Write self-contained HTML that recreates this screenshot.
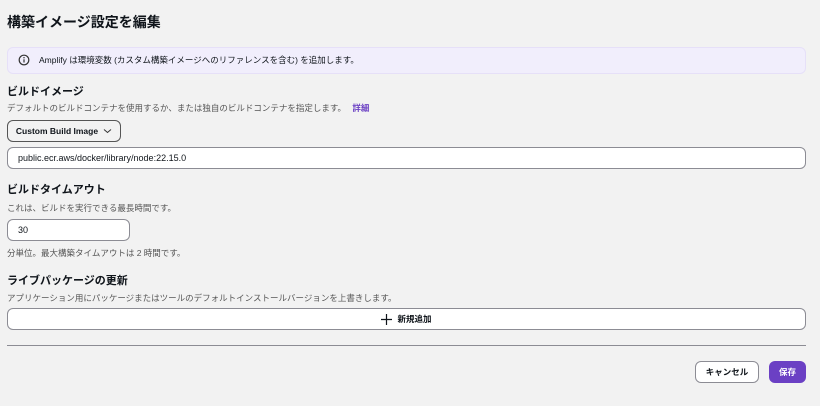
<!DOCTYPE html><html><head><meta charset="utf-8"><style>
*{box-sizing:border-box;margin:0;padding:0}
body{width:820px;height:406px;background:#f2f2f2;font-family:"Liberation Sans","Noto Sans CJK JP",sans-serif;color:#0f141a;position:relative;overflow:hidden}
.a{position:absolute}
h1{font-size:14px;font-weight:bold}
.t{font-size:11px;font-weight:bold}
.d{font-size:8.5px;color:#555}
.inp{background:#fff;border:1px solid #8c8c94;border-radius:6px;font-size:9px;padding-left:10px;display:flex;align-items:center}
.btn{border-radius:6px;font-size:8.5px;font-weight:bold;display:flex;align-items:center;justify-content:center}
</style></head><body>
<h1 class="a" style="left:7px;top:12px">構築イメージ設定を編集</h1>
<div class="a" style="left:7px;top:47px;width:799px;height:27px;background:#f1eefc;border-radius:6px;border:1px solid #e6e0f8"></div>
<svg class="a" style="left:18px;top:54px" width="12" height="12" viewBox="0 0 12 12"><circle cx="6" cy="6" r="4.8" fill="none" stroke="#333" stroke-width="1.2"/><line x1="6" y1="5.3" x2="6" y2="8.5" stroke="#333" stroke-width="1.2"/><circle cx="6" cy="3.7" r=".7" fill="#333"/></svg>
<div class="a" style="left:39px;top:54px;font-size:8.5px">Amplify は環境変数 (カスタム構築イメージへのリファレンスを含む) を追加します。</div>
<div class="a t" style="left:7px;top:83px">ビルドイメージ</div>
<div class="a d" style="left:7px;top:102px">デフォルトのビルドコンテナを使用するか、または独自のビルドコンテナを指定します。 <b style="color:#6b40c4;margin-left:4px">詳細</b></div>
<div class="a btn" style="left:7px;top:120px;width:114px;height:22px;border:1px solid #555;background:#f2f2f2">Custom Build Image <svg style="margin-left:5px" width="9" height="6" viewBox="0 0 9 6"><path d="M1 1.5 4.5 4.5 8 1.5" fill="none" stroke="#333" stroke-width="1"/></svg></div>
<div class="a inp" style="left:7px;top:147px;width:799px;height:22px">public.ecr.aws/docker/library/node:22.15.0</div>
<div class="a t" style="left:7px;top:181px">ビルドタイムアウト</div>
<div class="a d" style="left:7px;top:202px">これは、ビルドを実行できる最長時間です。</div>
<div class="a inp" style="left:7px;top:219px;width:123px;height:22px">30</div>
<div class="a d" style="left:7px;top:247px">分単位。最大構築タイムアウトは 2 時間です。</div>
<div class="a t" style="left:7px;top:272px">ライブパッケージの更新</div>
<div class="a d" style="left:7px;top:292px">アプリケーション用にパッケージまたはツールのデフォルトインストールバージョンを上書きします。</div>
<div class="a btn" style="left:7px;top:308px;width:799px;height:22px;background:#fff;border:1px solid #8c8c94"><svg style="margin-right:5px" width="11" height="11" viewBox="0 0 11 11"><path d="M5.5 0V11M0 5.5H11" stroke="#0f141a" stroke-width="1.2"/></svg>新規追加</div>
<div class="a" style="left:7px;top:345px;width:799px;height:1px;background:#8c8c94"></div>
<div class="a btn" style="left:695px;top:361px;width:64px;height:22px;background:#fff;border:1px solid #8c8c94">キャンセル</div>
<div class="a btn" style="left:769px;top:361px;width:37px;height:22px;background:#6b40c4;color:#fff">保存</div>
</body></html>
